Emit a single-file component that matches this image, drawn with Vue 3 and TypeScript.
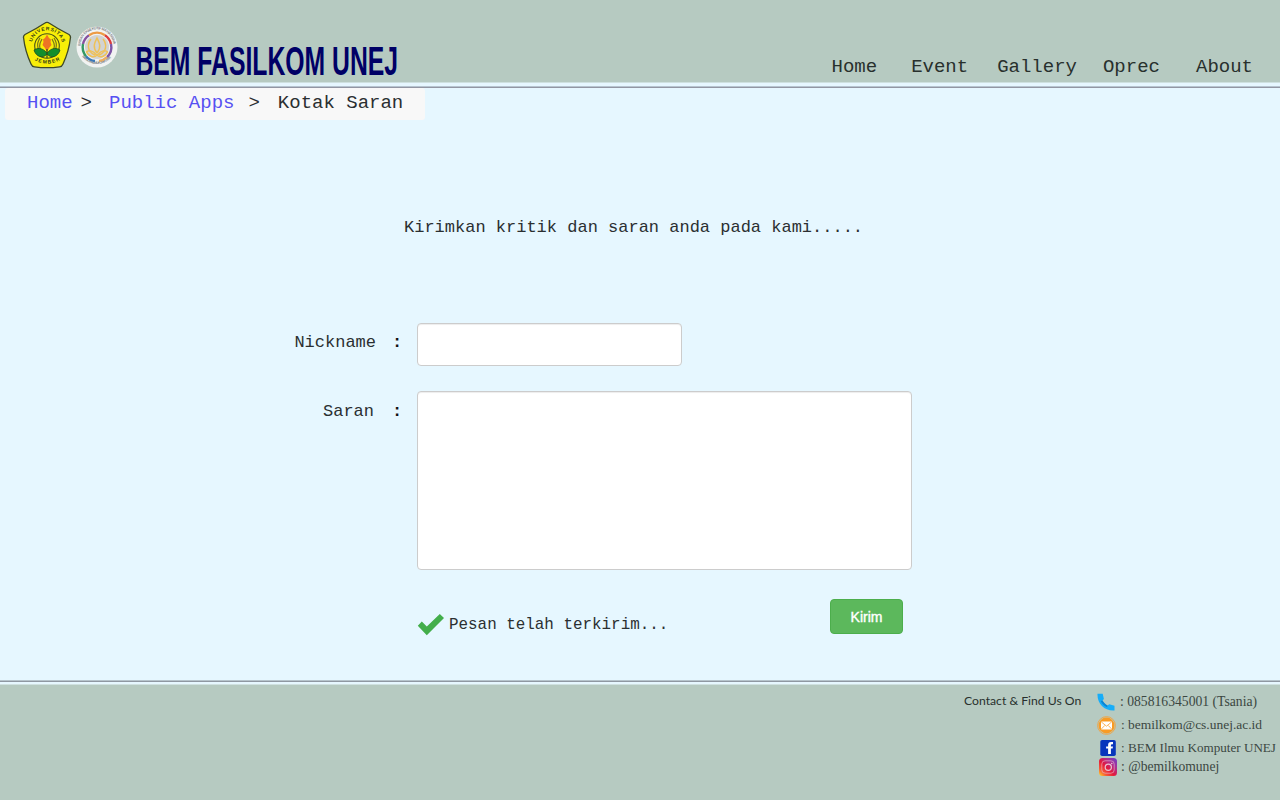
<script setup lang="ts">
import { ref } from 'vue'

interface NavItem { label: string; cls: string }

const nav: NavItem[] = [
  { label: 'Home', cls: 'n-home' },
  { label: 'Event', cls: 'n-event' },
  { label: 'Gallery', cls: 'n-gallery' },
  { label: 'Oprec', cls: 'n-oprec' },
  { label: 'About', cls: 'n-about' },
]
const nickname = ref('')
const saran = ref('')
</script>

<template>
  <div class="page">
    <header class="header">
      <svg class="crest" width="50" height="48" viewBox="0 0 50 48">
        <path d="M25 1.5 Q26 1.2 27 2 Q36 8 47 13.5 Q49 15 48.4 17 Q47 30 41 43 Q40 45.6 37.500 45.800 Q25 47.500 12.500 45.800 Q10 45.600 9 43 Q3 30 1.600 17 Q1 15 3 13.500 Q14 8 23 2 Q24 1.200 25 1.500Z" fill="#f8ee08" stroke="#3f4828" stroke-width="1.300" />
        <path id="crestTop" d="M10 21 A15.500 15.500 0 0 1 40 21" fill="none" />
        <path id="crestBottom" d="M9 37 Q25 48.500 41 37" fill="none" />
        <text class="crest-text"><textPath href="#crestTop" textLength="41">UNIVERSITAS</textPath></text>
        <text class="crest-text"><textPath href="#crestBottom" startOffset="4" textLength="27">JEMBER</textPath></text>
        <circle cx="25" cy="25" r="12.300" fill="#f8ee08" stroke="#49521b" stroke-width="1.100" />
        <path d="M22 34 C15 30 14 23 18 17 M28 34 C35 30 36 23 32 17 M20 31 C17 28 17 23 20 18 M30 31 C33 28 33 23 30 18" fill="none" stroke="#77741a" stroke-width="1.200" />
        <path d="M25 32 C20 26 15 27 12 29 C14 36 21 38 25 33 C29 38 36 36 38 29 C35 27 30 26 25 32Z" fill="#138e2c" stroke="#1a4c20" stroke-width=".8" />
        <path d="M25 13.500 L27 17 29 18.500 28.500 21 29.500 24 27 27 25 31 23 27 20.500 24 21.500 21 21 18.500 23 17Z" fill="#ee7424" />
        <path d="M25 28 V37" fill="none" stroke="#294d18" stroke-width="1.200" />
      </svg>
      <svg class="seal" width="42" height="42" viewBox="0 0 42 42">
        <circle cx="21" cy="21" r="20.500" fill="#f1f3f2" />
        <path id="sealTop" d="M4.800 23 A16.500 16.500 0 1 1 37.200 23" fill="none" />
        <path id="sealBottom" d="M5 29 A18.800 18.800 0 0 0 37 29" fill="none" />
        <text class="seal-text"><textPath href="#sealTop" startOffset="3" textLength="50">BADAN EKSEKUTIF MAHASISWA</textPath></text>
        <text class="seal-text"><textPath href="#sealBottom" startOffset="2" textLength="33">FAKULTAS ILMU KOMPUTER</textPath></text>
        <g fill="none" stroke-width="2.400">
          <path d="M7 18 A14.300 14.300 0 0 1 13 9.200" stroke="#8652a0" />
          <path d="M13 9.200 A14.300 14.300 0 0 1 29 9.200" stroke="#ed9b45" />
          <path d="M29 9.200 A14.300 14.300 0 0 1 35 18" stroke="#dc3c3d" />
          <path d="M35 18 A14.300 14.300 0 0 1 31 31.200" stroke="#7d55a5" />
          <path d="M31 31.200 A14.300 14.300 0 0 1 23 35" stroke="#e9ad62" />
          <path d="M19 35 A14.300 14.300 0 0 1 10 30.200" stroke="#3b79b9" />
          <path d="M10 30.200 A14.300 14.300 0 0 1 7 18" stroke="#349964" />
        </g>
        <circle cx="21" cy="21" r="12" fill="#d2d3d2" />
        <g fill="none" stroke="#efc157" stroke-width="1.500">
          <path d="M19 29 C11 26 11 18 15 13 M23 29 C31 26 31 18 27 13 M21 27 C16 21 19 16 21 12 C23 16 26 21 21 27" />
          <path d="M20.500 29 C17 24 12 24 10.500 26 C13 31 18 32 21 29 C24 32 29 31 31.500 26 C30 24 25 24 21.500 29Z" />
        </g>
      </svg>
      <svg class="brand" width="266" height="36" viewBox="0 0 266 36">
        <text x="0.500" y="31" textLength="262.500" lengthAdjust="spacingAndGlyphs">BEM FASILKOM UNEJ</text>
      </svg>
      <nav class="nav">
        <a v-for="item in nav" :key="item.label" :class="item.cls">{{ item.label }}</a>
      </nav>
    </header>
    <div class="rule rule-top"></div>

    <main class="main">
      <div class="crumbs">
        <a class="c-home">Home</a><span class="c-sep1">&gt;</span><a class="c-apps">Public Apps</a><span class="c-sep2">&gt;</span><span class="c-here">Kotak Saran</span>
      </div>
      <p class="prompt">Kirimkan kritik dan saran anda pada kami.....</p>
      <div class="row row-nick">
        <label class="label" for="nick">Nickname</label><b class="colon colon-nick">:</b>
        <input id="nick" v-model="nickname" class="field input" type="text" />
      </div>
      <div class="row row-saran">
        <label class="label label-saran" for="saran">Saran</label><b class="colon">:</b>
        <textarea id="saran" v-model="saran" class="field area"></textarea>
      </div>
      <div class="row row-send">
        <svg class="check" width="28" height="24" viewBox="0 0 28 24">
          <path d="M.8 12.800 L4.800 8.600 L9.800 13.600 L22.800 1 L27 5 L9.800 22.200Z" fill="#43ae4b" />
        </svg>
        <span class="sent">Pesan telah terkirim...</span>
        <button class="send" type="button">Kirim</button>
      </div>
    </main>

    <div class="rule rule-bottom"></div>
    <footer class="footer">
      <div class="contact">Contact &amp; Find Us On</div>
      <ul class="links">
        <li class="l-phone">
          <svg width="18" height="18" viewBox="0 0 18 18">
            <path d="M.5 .8 H5.700 L6.900 6 L5.500 7.600 C6.700 9.900 8.100 11.300 10.500 12.500 L12.300 11.200 L17.500 12.700 V17.500 C7.500 18.200 0 10.800 .5 .8Z" fill="#17adf8" />
            <path d="M3.700 8 L5.500 7.600 C6.700 9.900 8.100 11.300 10.500 12.500 L10.300 14.300 C7.500 13.300 4.600 10.800 3.700 8Z" fill="#0b84d3" />
          </svg>
          <span>: 085816345001 (Tsania)</span>
        </li>
        <li class="l-mail">
          <svg width="19" height="19" viewBox="0 0 19 19">
            <circle cx="9.500" cy="9.500" r="8.900" fill="#b8cbb9" stroke="#efa344" stroke-width=".9" />
            <circle cx="9.500" cy="9.500" r="7.900" fill="#f99b24" />
            <rect x="4" y="5.400" width="11" height="8" rx=".7" fill="#fff" />
            <path d="M4.200 5.800 L9.500 10.200 L14.800 5.800 M4.200 13.200 L7.800 9.400 M14.800 13.200 L11.200 9.400" fill="none" stroke="#f7a23a" stroke-width=".8" />
          </svg>
          <span>: bemilkom@cs.unej.ac.id</span>
        </li>
        <li class="l-face">
          <svg width="16" height="16" viewBox="0 0 16 16">
            <rect x=".3" width="15.500" height="16" rx="1.800" fill="#0735bc" />
            <path d="M8.100 14 V8.600 H6.100 V6.400 H8.100 V4.900 Q8.100 2 11 2 H13 V4.300 H12 Q10.900 4.300 10.900 5.300 V6.400 H13 L12.600 8.600 H10.900 V14Z" fill="#fff" />
          </svg>
          <span>: BEM Ilmu Komputer UNEJ</span>
        </li>
        <li class="l-insta">
          <svg width="18" height="18" viewBox="0 0 18 18">
            <defs>
              <linearGradient id="ig" x1="0" y1="1" x2="1" y2="0">
                <stop offset="0" stop-color="#ffe028" /><stop offset=".22" stop-color="#f65b35" />
                <stop offset=".45" stop-color="#e3183d" /><stop offset=".72" stop-color="#a92f98" />
                <stop offset="1" stop-color="#6840ca" />
              </linearGradient>
            </defs>
            <rect width="18" height="18" rx="3.500" fill="url(#ig)" />
            <rect x="2.800" y="2.800" width="12.400" height="12.400" rx="3.300" fill="none" stroke="#e9c2d2" stroke-opacity=".6" stroke-width="1" />
            <circle cx="9.300" cy="9.300" r="3.100" fill="none" stroke="#e9c2d2" stroke-width="1.200" />
            <circle cx="12.800" cy="5.500" r=".8" fill="#e9c2d2" />
          </svg>
          <span>: @bemilkomunej</span>
        </li>
      </ul>
    </footer>
  </div>
</template>

<style>
body { margin: 0; background: #e6f7ff; }
</style>

<style scoped>
* { box-sizing: border-box; }
.page { width: 1280px; height: 800px; overflow: hidden; display: flex; flex-direction: column; background: #e6f7ff; font-family: "Liberation Mono", "Courier New", monospace; color: #2b2f31; }
.header { height: 82px; flex: none; background: #b6cac1; display: flex; align-items: flex-start; }
.crest { margin: 21px 0 0 22px; flex: none; }
.crest-text { font: bold 5px "Liberation Sans", sans-serif; fill: #343b17; }
.seal { margin: 26px 0 0 4px; flex: none; }
.seal-text { font: bold 3.600px "Liberation Sans", sans-serif; fill: #84878a; }
.brand { margin: 44px 0 0 17px; flex: none; overflow: visible; }
.brand text { font: bold 41px "Liberation Sans Narrow", "Liberation Sans", sans-serif; fill: #000066; }
.nav { display: flex; margin: 56px 27px 0 auto; font-size: 19px; line-height: 22px; color: #28302d; }
.n-event { margin-left: 34px; }
.n-gallery { margin-left: 29px; }
.n-oprec { margin-left: 26px; }
.n-about { margin-left: 36px; }
.rule { flex: none; }
.rule-top { height: 6px; background: linear-gradient(#cfe1e0 0 1px, #e6f7ff 1px 4px, #b6c4cf 4px 5px, #9296a3 5px 6px); }
.rule-bottom { height: 5px; background: linear-gradient(#b6c4cc 0 1px, #8f98a2 1px 2px, #e6f7ff 2px 4px, #cfe1e0 4px 5px); }
.main { height: 592px; flex: none; }
.crumbs { width: 420px; height: 32px; margin-left: 5px; padding: 4px 0 0 22px; background: #f8f8f8; border-radius: 3px; display: flex; font-size: 19px; line-height: 22px; white-space: nowrap; }
.crumbs a { color: #5650f2; }
.c-sep1 { margin-left: 8px; }
.c-apps { margin-left: 17px; }
.c-sep2 { margin-left: 14px; }
.c-here { margin-left: 18px; }
.prompt { margin: 98px 0 0 404px; font-size: 17px; line-height: 20px; }
.row { display: flex; align-items: flex-start; }
.row-nick { margin-top: 85px; }
.row-saran { margin-top: 25px; }
.label { width: 376px; padding-top: 10px; text-align: right; font-size: 17px; line-height: 20px; }
.label-saran { width: 374px; padding-top: 11px; }
.colon { width: 43px; padding: 11px 0 0 18px; font-size: 17px; line-height: 20px; color: #111; }
.colon-nick { width: 41px; padding: 10px 0 0 16px; }
.field { display: block; margin: 0; padding: 6px 12px; border: 1px solid #ccc; border-radius: 4px; background: #fff; box-shadow: inset 0 1px 1px rgba(0, 0, 0, .075); outline: none; font: inherit; resize: none; }
.input { width: 265px; height: 43px; }
.area { width: 495px; height: 179px; }
.row-send { margin-top: 29px; padding-left: 417px; }
.check { margin-top: 14px; }
.sent { width: 382px; margin: 17px 0 0 4px; font-size: 15.900px; line-height: 18px; }
.send { width: 73px; height: 35px; margin: 0 0 0 -1px; padding: 0; border: 1px solid #4cae4c; border-radius: 4px; background: #5cb85c; color: #fff; font: 14px "Liberation Sans", Arial, sans-serif; -webkit-text-stroke: .4px #fff; }
.footer { flex: 1; background: #b6cac1; display: flex; align-items: flex-start; }
.contact { width: 120px; margin: 8px 0 0 964px; flex: none; font: 12.200px/16px Lato, sans-serif; color: #28302d; white-space: nowrap; }
.links { list-style: none; margin: 0 0 0 13px; padding: 0; color: #3b4742; font-family: "Liberation Serif", "Times New Roman", serif; line-height: 16px; white-space: nowrap; }
.links li { display: flex; align-items: center; }
.l-phone { height: 20px; margin-top: 7px; font-size: 13.670px; }
.l-phone span { margin-left: 5px; }
.l-mail { height: 20px; margin-top: 3px; font-size: 13.470px; }
.l-mail span { margin-left: 5px; }
.l-face { height: 20px; margin: 3px 0 0 3px; font-size: 13.100px; }
.l-face span { margin-left: 5px; }
.l-insta { height: 20px; margin: -1px 0 0 2px; font-size: 13.600px; }
.l-insta span { margin-left: 4px; }
</style>
